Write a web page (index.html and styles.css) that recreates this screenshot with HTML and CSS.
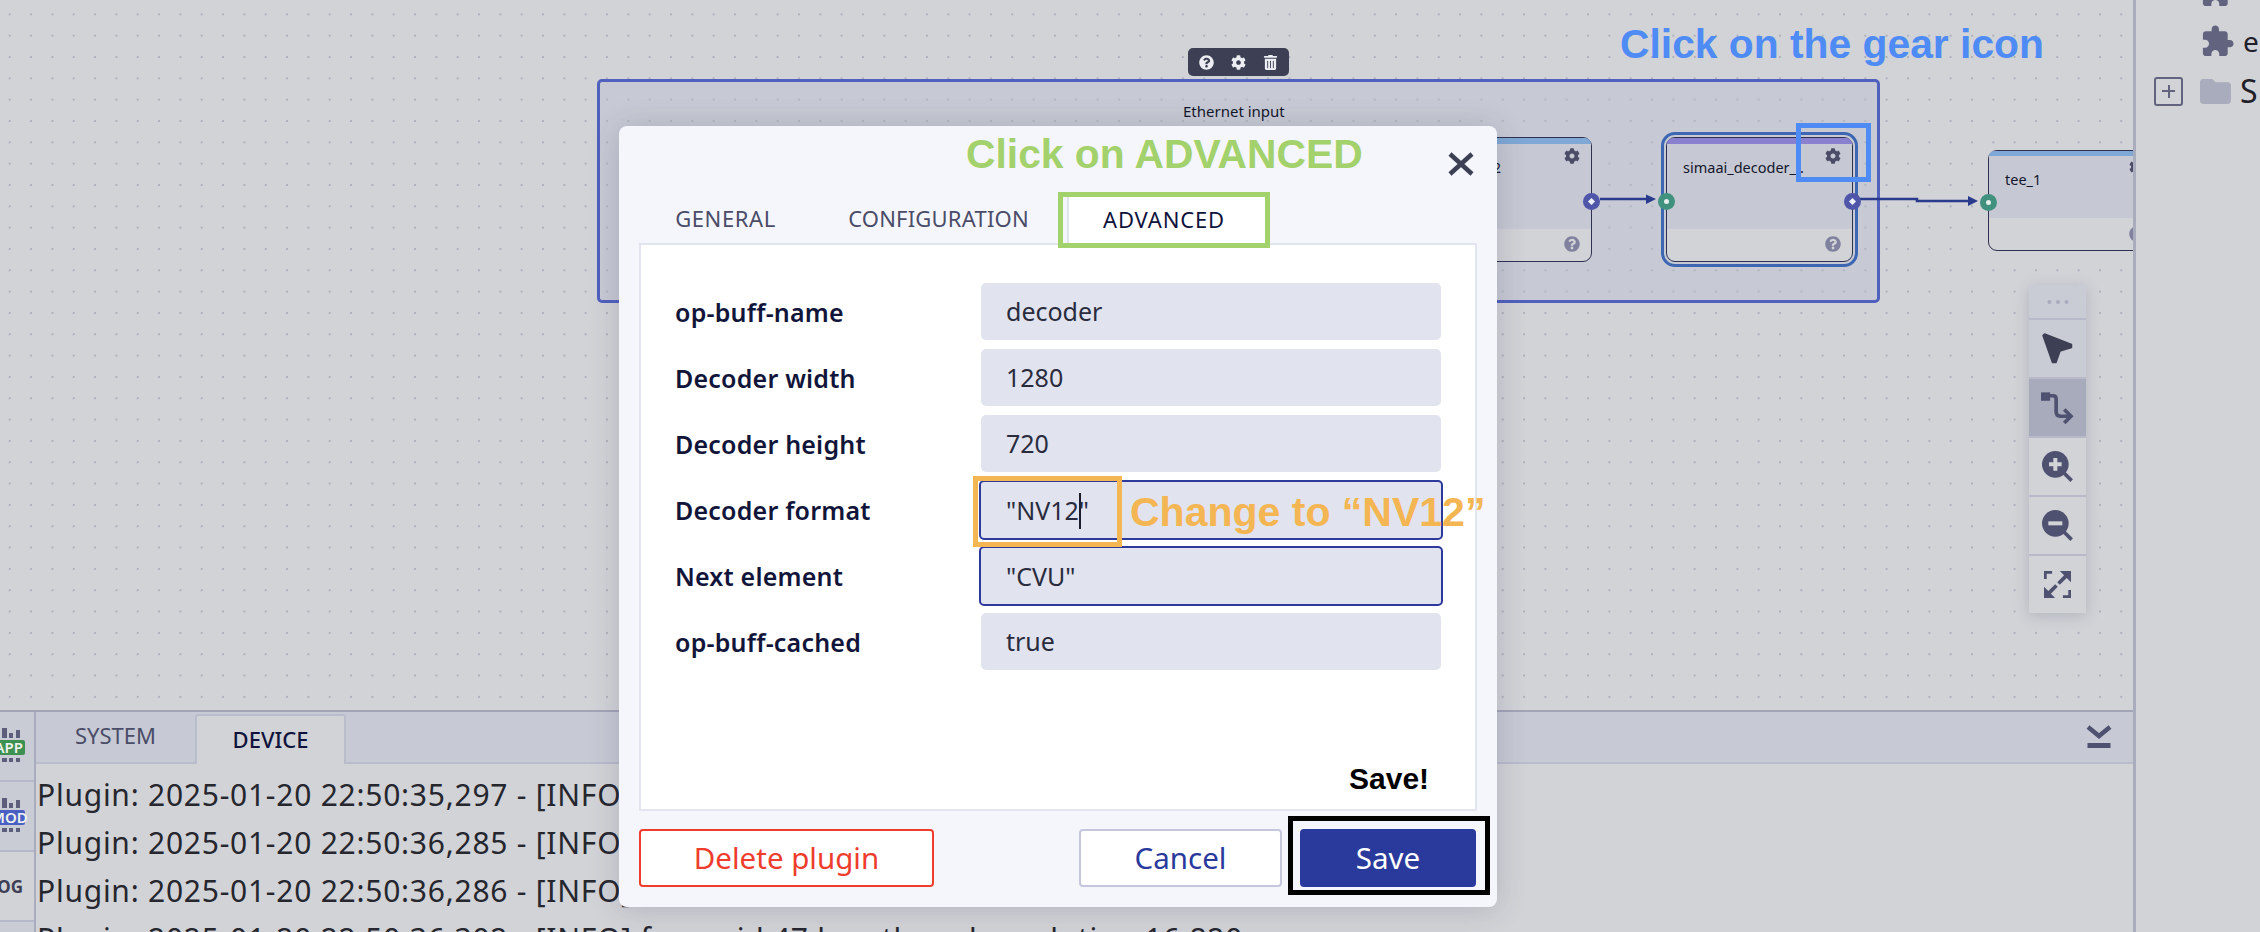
FILE: index.html
```html
<!DOCTYPE html>
<html lang="en">
<head>
<meta charset="utf-8">
<title>Plugin settings</title>
<link rel="stylesheet" href="styles.css">
</head>
<body>
<svg class="defs" width="0" height="0" aria-hidden="true">
  <symbol id="cog" viewBox="0 0 512 512"><path d="M487.4 315.7l-42.6-24.6c4.3-23.2 4.3-47 0-70.2l42.6-24.6c4.9-2.8 7.1-8.6 5.5-14-11.1-35.6-30-67.8-54.7-94.6-3.8-4.1-10-5.1-14.8-2.3L380.8 110c-17.9-15.4-38.5-27.3-60.8-35.1V25.8c0-5.6-3.9-10.5-9.4-11.7-36.7-8.2-74.3-7.8-109.2 0-5.5 1.2-9.4 6.1-9.4 11.7V75c-22.2 7.9-42.8 19.8-60.8 35.1L88.7 85.5c-4.9-2.8-11-1.9-14.8 2.3-24.7 26.7-43.6 58.9-54.7 94.6-1.7 5.4.6 11.2 5.5 14L67.3 221c-4.3 23.2-4.3 47 0 70.2l-42.6 24.6c-4.9 2.8-7.1 8.6-5.5 14 11.1 35.6 30 67.8 54.7 94.6 3.8 4.1 10 5.1 14.8 2.3l42.6-24.6c17.9 15.4 38.5 27.3 60.8 35.1v49.2c0 5.6 3.9 10.5 9.4 11.7 36.7 8.2 74.3 7.8 109.2 0 5.5-1.2 9.4-6.1 9.4-11.7v-49.2c22.2-7.9 42.8-19.8 60.8-35.1l42.6 24.6c4.9 2.8 11 1.9 14.8-2.3 24.7-26.7 43.6-58.9 54.7-94.6 1.5-5.5-.7-11.3-5.6-14.1zM256 336c-44.1 0-80-35.9-80-80s35.9-80 80-80 80 35.9 80 80-35.9 80-80 80z"/></symbol>
  <symbol id="help" viewBox="0 0 512 512"><path d="M504 256c0 136.997-111.043 248-248 248S8 392.997 8 256C8 119.083 119.043 8 256 8s248 111.083 248 248zM262.655 90c-54.497 0-89.255 22.957-116.549 63.758-3.536 5.286-2.353 12.415 2.715 16.258l34.699 26.31c5.205 3.947 12.621 3.008 16.665-2.122 17.864-22.658 30.113-35.797 57.303-35.797 20.429 0 45.698 13.148 45.698 32.958 0 14.976-12.363 22.667-32.534 33.976C247.128 238.528 216 254.941 216 296v4c0 6.627 5.373 12 12 12h56c6.627 0 12-5.373 12-12v-1.333c0-28.462 83.186-29.647 83.186-106.667 0-58.002-60.165-102-116.531-102zM256 338c-25.365 0-46 20.635-46 46 0 25.364 20.635 46 46 46s46-20.636 46-46c0-25.365-20.635-46-46-46z"/></symbol>
  <symbol id="trash" viewBox="0 0 448 512"><path d="M32 464a48 48 0 0 0 48 48h288a48 48 0 0 0 48-48V128H32zm272-256a16 16 0 0 1 32 0v224a16 16 0 0 1-32 0zm-96 0a16 16 0 0 1 32 0v224a16 16 0 0 1-32 0zm-96 0a16 16 0 0 1 32 0v224a16 16 0 0 1-32 0zM432 32H312l-9.4-18.7A24 24 0 0 0 281.1 0H166.8a23.72 23.72 0 0 0-21.4 13.3L136 32H16A16 16 0 0 0 0 48v32a16 16 0 0 0 16 16h416a16 16 0 0 0 16-16V48a16 16 0 0 0-16-16z"/></symbol>
  <symbol id="puzzle" viewBox="0 0 24 24"><path d="M20.5 11H19V7c0-1.1-.9-2-2-2h-4V3.5C13 2.12 11.88 1 10.5 1S8 2.12 8 3.5V5H4c-1.1 0-1.99.9-1.99 2v3.8H3.5c1.49 0 2.7 1.21 2.7 2.7s-1.21 2.7-2.7 2.7H2V20c0 1.1.9 2 2 2h3.8v-1.5c0-1.49 1.21-2.7 2.7-2.7 1.49 0 2.7 1.21 2.7 2.7V22H17c1.1 0 2-.9 2-2v-4h1.5c1.38 0 2.5-1.12 2.5-2.5S21.88 11 20.5 11z"/></symbol>
</svg>

<div class="app">
  <div class="main">
    <section class="canvas">
      <div class="group">
        <div class="group-title">Ethernet input</div>
      </div>
      <div class="group-tools">
        <svg class="gt-icon"><use href="#help"/></svg>
        <svg class="gt-icon"><use href="#cog"/></svg>
        <svg class="gt-icon"><use href="#trash"/></svg>
      </div>

      <svg class="edges" width="2133" height="711" viewBox="0 0 2133 711">
        <path class="edge" d="M1600 199H1648"/>
        <polygon class="edge-head" points="1646,194.5 1656,199 1646,204"/>
        <path class="edge" d="M1858 199H1917V201H1970"/>
        <polygon class="edge-head" points="1968,196 1978,201 1968,206"/>
      </svg>

      <article class="node node-prev">
        <div class="node-strip"></div>
        <div class="node-body"><span class="node-name name-prev">rtpdepay_2</span></div>
        <div class="node-foot"></div>
        <svg class="node-gear"><use href="#cog"/></svg>
        <svg class="node-help"><use href="#help"/></svg>
        <span class="port port-out"></span>
      </article>

      <div class="node-ring"></div>
      <article class="node node-sel">
        <div class="node-strip strip-purple"></div>
        <div class="node-body"><span class="node-name">simaai_decoder_..</span></div>
        <div class="node-foot"></div>
        <svg class="node-gear"><use href="#cog"/></svg>
        <svg class="node-help"><use href="#help"/></svg>
        <span class="port port-in"></span>
        <span class="port port-out"></span>
      </article>

      <div class="tee-clip">
        <article class="node node-tee">
          <div class="node-strip"></div>
          <div class="node-body"><span class="node-name">tee_1</span></div>
          <div class="node-foot"></div>
          <svg class="node-gear"><use href="#cog"/></svg>
          <svg class="node-help"><use href="#help"/></svg>
          <span class="port port-in"></span>
        </article>
      </div>

      <div class="mini-tools">
        <div class="mt mt-handle">
          <svg width="22" height="6" viewBox="0 0 22 6"><circle class="mt-dot" cx="2.5" cy="3" r="2"/><circle class="mt-dot" cx="11" cy="3" r="2"/><circle class="mt-dot" cx="19.5" cy="3" r="2"/></svg>
        </div>
        <div class="mt mt-tint">
          <svg width="31" height="31" viewBox="0 0 31 31"><path class="mt-dark" d="M1 2.6L2.6 1 29.5 11.5 29.5 14.5 18 18 14 29.5 10.5 29.5z"/></svg>
        </div>
        <div class="mt mt-active">
          <svg width="37" height="37" viewBox="180 360 110 110"><rect class="mt-fill" x="186" y="370" width="27" height="25"/><path class="mt-line" d="M210 380H222Q231 380 231 390V428Q231 441 244 441H274"/><path class="mt-line" d="M255 421L275 441 255 461"/></svg>
        </div>
        <div class="mt">
          <svg width="35" height="35" viewBox="180 540 105 105"><circle class="mt-fill" cx="226" cy="586" r="40"/><path class="mt-line" d="M252 612L275 635"/><path class="mt-knock" d="M207 586H245M226 567V605"/></svg>
        </div>
        <div class="mt">
          <svg width="35" height="35" viewBox="180 540 105 105"><circle class="mt-fill" cx="226" cy="586" r="40"/><path class="mt-line" d="M252 612L275 635"/><path class="mt-knock" d="M205 586H247"/></svg>
        </div>
        <div class="mt">
          <svg width="29" height="29" viewBox="190 907 86 86"><path class="mt-line mt-miter" d="M197 934V914H217M269 966V986H249"/><polygon class="mt-fill" points="240,910 273,910 273,943"/><polygon class="mt-fill" points="193,990 193,957 226,990"/><path class="mt-line" d="M258 925L236 947M208 975L230 953"/></svg>
        </div>
      </div>
    </section>

    <section class="console">
      <nav class="rail">
        <div class="rail-item rail-tint">
          <div class="bars"><i class="b1"></i><i class="b2"></i><i class="b3"></i></div>
          <div class="badge badge-app">APP</div>
          <div class="squares"><i></i><i></i><i></i></div>
        </div>
        <div class="rail-item rail-tint">
          <div class="bars"><i class="b1"></i><i class="b2"></i><i class="b3"></i></div>
          <div class="badge badge-mod">MOD</div>
          <div class="squares"><i></i><i></i><i></i></div>
        </div>
        <div class="rail-item rail-log"><span class="log-label">LOG</span></div>
        <div class="rail-item rail-tint"></div>
      </nav>
      <div class="console-main">
        <div class="console-tabs">
          <div class="ctab">SYSTEM</div>
          <div class="ctab ctab-active">DEVICE</div>
          <svg class="collapse" width="26" height="25" viewBox="0 0 26 25"><path d="M2 2L13 11 24 2" /><rect x="1.5" y="18" width="23" height="5"/></svg>
        </div>
        <div class="log">
          <div>Plugin: 2025-01-20 22:50:35,297 - [INFO]</div>
          <div>Plugin: 2025-01-20 22:50:36,285 - [INFO]</div>
          <div>Plugin: 2025-01-20 22:50:36,286 - [INFO]</div>
          <div>Plugin: 2025-01-20 22:50:36,302 - [INFO] frame id 47 length and resolution 16,820</div>
        </div>
      </div>
    </section>
  </div>

  <aside class="tree">
    <div class="tree-row tree-leaf"><svg class="tree-puzzle"><use href="#puzzle"/></svg></div>
    <div class="tree-row tree-leaf"><svg class="tree-puzzle"><use href="#puzzle"/></svg><span class="tree-text">ethernet</span></div>
    <div class="tree-row tree-folder">
      <span class="plus-box"></span>
      <svg class="tree-dir" viewBox="2 4 20 16"><path d="M10 4H4c-1.1 0-1.99.9-1.99 2L2 18c0 1.1.9 2 2 2h16c1.1 0 2-.9 2-2V8c0-1.1-.9-2-2-2h-8l-2-2z"/></svg>
      <span class="tree-text">Samples</span>
    </div>
  </aside>
</div>

<div class="modal">
  <svg class="close" width="26" height="24" viewBox="0 0 26 24"><path d="M2 2L24 22M24 2L2 22"/></svg>
  <div class="tabs">
    <div class="tab tab-general">GENERAL</div>
    <div class="tab tab-config">CONFIGURATION</div>
    <div class="tab tab-active">ADVANCED</div>
  </div>
  <div class="panel">
    <div class="form">
      <div class="label">op-buff-name</div><div class="field">decoder</div>
      <div class="label">Decoder width</div><div class="field">1280</div>
      <div class="label">Decoder height</div><div class="field">720</div>
      <div class="label">Decoder format</div><div class="field field-focus">"NV12<span class="caret"></span>"</div>
      <div class="label">Next element</div><div class="field field-focus">"CVU"</div>
      <div class="label">op-buff-cached</div><div class="field">true</div>
    </div>
  </div>
  <div class="actions">
    <button class="btn btn-delete">Delete plugin</button>
    <button class="btn btn-cancel">Cancel</button>
    <button class="btn btn-save">Save</button>
  </div>
</div>

<div class="note note-gear">Click on the gear icon</div>
<div class="mark mark-gear"></div>
<div class="note note-adv">Click on ADVANCED</div>
<div class="mark mark-adv"></div>
<div class="mark mark-fmt"></div>
<div class="note note-fmt">Change to “NV12”</div>
<div class="note note-save">Save!</div>
<div class="mark mark-save"></div>
</body>
</html>
```

FILE: styles.css
```css
* { box-sizing: border-box; }
html, body { margin: 0; height: 100%; }
body {
  width: 2260px;
  height: 932px;
  position: relative;
  overflow: hidden;
  background: #d2d3d7;
  font-family: "Noto Sans", "Open Sans", sans-serif;
  color: #12153a;
}
.defs { position: absolute; }

.app { display: flex; width: 2260px; height: 932px; }
.main { width: 2133px; height: 932px; display: flex; flex-direction: column; }

/* canvas */
.canvas {
  position: relative;
  height: 710px;
  overflow: hidden;
  background-color: #d2d3d7;
  background-image: radial-gradient(circle, #aeb0bb 1px, transparent 1.4px);
  background-size: 21.33px 21.33px;
  background-position: -0.9px 3.7px;
}
.group {
  position: absolute;
  left: 597px; top: 79px;
  width: 1283px; height: 224px;
  border: 3px solid #5060bd;
  border-radius: 5px;
  background: rgba(183, 190, 208, .42);
}
.group-title {
  position: absolute;
  left: 583px; top: 19px;
  font-size: 15px;
  line-height: 20px;
  color: #14162c;
  white-space: nowrap;
}
.group-tools {
  position: absolute;
  left: 1188px; top: 48px;
  width: 101px; height: 28px;
  background: #3d3f54;
  border-radius: 5px;
  display: flex;
  align-items: center;
  justify-content: center;
  gap: 17px;
}
.gt-icon { width: 15px; height: 15px; fill: #eceef3; }

.edges { position: absolute; left: 0; top: 0; }
.edge { fill: none; stroke: #2a3a8c; stroke-width: 2.6; }
.edge-head { fill: #2a3a8c; }

.node {
  position: absolute;
  width: 187px;
  display: flex;
  flex-direction: column;
  border: 1.5px solid #2f3150;
  border-radius: 9px;
  background: #d2d3d7;
}
.node-prev { left: 1405px; top: 137px; height: 125px; }
.node-sel { left: 1666px; top: 137px; height: 125px; }
.node-strip {
  height: 6px;
  background: #7fa8d6;
  border-radius: 7px 7px 0 0;
}
.strip-purple { background: #8a80d0; }
.node-body {
  height: 85px;
  background: #c6c9d3;
  padding: 13px 0 0 16px;
}
.node-name { font-size: 14.5px; line-height: 20px; color: #14162c; white-space: nowrap; display: block; }
.name-prev { letter-spacing: .3px; }
.node-foot { flex: 1; }
.node-gear { position: absolute; right: 11px; top: 10px; width: 16px; height: 16px; fill: #4a4c68; }
.node-help { position: absolute; right: 11px; bottom: 9px; width: 16px; height: 16px; fill: #7f819e; }
.port {
  position: absolute;
  top: 55px;
  width: 17px; height: 17px;
  border-radius: 50%;
  display: block;
}
.port-in { left: -9px; background: #41917f; }
.port-in::after {
  content: ""; position: absolute; left: 6px; top: 6px;
  width: 5px; height: 5px; border-radius: 50%; background: #e6efec;
}
.port-out { right: -9px; background: #4f55a8; }
.port-out::after {
  content: ""; position: absolute; left: 6px; top: 6px;
  width: 5px; height: 5px; background: #eef0f8; transform: rotate(45deg);
}
.node-ring {
  position: absolute;
  left: 1661px; top: 132px;
  width: 197px; height: 135px;
  border: 3px solid #3d66b3;
  border-radius: 14px;
}
.tee-clip {
  position: absolute;
  left: 1970px; top: 140px;
  width: 163px; height: 120px;
  overflow: hidden;
}
.node-tee { left: 18px; top: 10px; height: 101px; width: 187px; }
.node-tee .node-strip { height: 5px; }
.node-tee .node-body { height: 62px; }
.node-tee .port { top: 43px; }
.node-tee .node-gear { right: 29px; top: 8px; }
.node-tee .node-help { right: 29px; bottom: 8px; }

/* floating tools on the canvas */
.mini-tools {
  position: absolute;
  left: 2029px; top: 285px;
  width: 57px;
  display: flex;
  flex-direction: column;
  gap: 2px;
  background: #b8bac9;
  box-shadow: 0 3px 14px rgba(70, 72, 100, .22);
}
.mt {
  height: 57px;
  background: #d2d3d7;
  display: flex;
  align-items: center;
  justify-content: center;
}
.mt-handle { height: 33px; background: #c9ccd5; }
.mt-tint { background: #c9ccd5; }
.mt-active { background: #a8abbc; }
.mt-dot { fill: #a9acc0; }
.mt-dark { fill: #3d3f54; stroke: #3d3f54; stroke-width: 1.5; stroke-linejoin: round; }
.mt-fill { fill: #4f5170; }
.mt-line { fill: none; stroke: #4f5170; stroke-width: 11; }
.mt-miter { stroke-width: 8; }
.mt-knock { fill: none; stroke: #d2d3d7; stroke-width: 12; }

/* console */
.console {
  height: 222px;
  display: flex;
  border-top: 2px solid #a2a5b8;
  overflow: hidden;
}
.rail {
  width: 36px;
  border-right: 2px solid #a9acbd;
  display: flex;
  flex-direction: column;
  flex: none;
  overflow: hidden;
}
.rail-item {
  height: 70px;
  flex: none;
  border-bottom: 2px solid #b5b8c8;
  display: flex;
  flex-direction: column;
  align-items: flex-end;
  padding: 16px 9px 0 0;
  overflow: hidden;
}
.rail-tint { background: #c9ccd5; }
.rail-log { padding-top: 0; justify-content: center; background: #d2d3d7; }
.rail-item:last-child { border-bottom: 0; }
.bars {
  width: 18px; height: 10px;
  margin-right: 5px;
  display: flex;
  justify-content: space-between;
  align-items: flex-end;
}
.bars i { width: 4.5px; background: #5c5e7c; display: block; }
.bars .b1 { height: 10px; }
.bars .b2 { height: 5px; }
.bars .b3 { height: 8px; }
.badge {
  flex: none;
  width: 34px;
  height: 15px;
  margin-top: 2px;
  border-radius: 2px;
  color: #eef2ee;
  font-size: 15px;
  font-weight: 600;
  line-height: 15px;
  text-align: right;
  padding-right: 2px;
  white-space: nowrap;
}
.badge-app { background: #3d9150; }
.badge-mod { background: #4a5fc4; }
.squares { width: 18px; margin: 3px 5px 0 0; display: flex; justify-content: space-between; }
.squares i { width: 4.5px; height: 3.5px; background: #5c5e7c; display: block; }
.log-label {
  font-size: 17px;
  font-weight: 700;
  color: #3d3f54;
  white-space: nowrap;
  margin-right: 2px;
  flex: none;
}
.console-main { flex: 1; min-width: 0; display: flex; flex-direction: column; }
.console-tabs {
  height: 52px;
  flex: none;
  display: flex;
  align-items: stretch;
  background: #c7cad4;
  border-bottom: 2px solid #b9bccb;
}
.ctab {
  width: 159px;
  font-size: 22px;
  line-height: 46px;
  text-align: center;
  color: #4a4c68;
}
.ctab-active {
  width: 151px;
  margin: 2px 0 -2px;
  background: #d2d3d7;
  border: 2px solid #b9bccb;
  border-bottom: 0;
  border-radius: 3px 3px 0 0;
  color: #10143c;
  font-weight: 500;
}
.collapse { margin: 13px 21px 0 auto; }
.collapse path { fill: none; stroke: #4f5170; stroke-width: 4.5; }
.collapse rect { fill: #4f5170; }
.log {
  padding: 7px 0 0 1px;
  font-size: 30px;
  line-height: 48px;
  letter-spacing: .75px;
  color: #25262e;
  white-space: nowrap;
}

/* right tree */
.tree {
  width: 127px;
  height: 932px;
  flex: none;
  border-left: 3px solid #a9acbd;
  background: #d2d3d7;
  overflow: hidden;
  color: #1f2029;
}
.tree-row { height: 50px; display: flex; align-items: center; white-space: nowrap; }
.tree-row:first-child { margin-top: -34px; }
.tree-leaf { padding-left: 64px; }
.tree-folder { padding-left: 18px; }
.tree-puzzle { width: 35px; height: 35px; fill: #62647f; flex: none; }
.tree-text { font-size: 28px; margin-left: 8px; line-height: 36px; letter-spacing: 5px; }
.plus-box {
  width: 29px; height: 29px;
  border: 2px solid #62647f;
  border-radius: 3px;
  flex: none;
  position: relative;
}
.plus-box::before, .plus-box::after { content: ""; position: absolute; background: #62647f; }
.plus-box::before { left: 6px; right: 6px; top: 11.5px; height: 2px; }
.plus-box::after { top: 6px; bottom: 6px; left: 11.5px; width: 2px; }
.tree-dir { width: 31px; height: 27px; margin-left: 17px; fill: #a9acbd; flex: none; }
.tree-folder .tree-text { margin-left: 9px; font-size: 32px; }

/* modal */
.modal {
  position: absolute;
  left: 619px; top: 126px;
  width: 878px; height: 781px;
  background: #f5f6fc;
  border-radius: 8px;
  box-shadow: 0 2px 30px rgba(50, 52, 80, .2);
  padding: 68px 20px 0 20px;
  display: flex;
  flex-direction: column;
}
.close { position: absolute; left: 829px; top: 26px; }
.close path { fill: none; stroke: #3d3f54; stroke-width: 4.5; }
.tabs { display: flex; height: 51px; flex: none; margin-bottom: -2px; position: relative; }
.tab {
  font-size: 22px;
  line-height: 48px;
  text-align: center;
  color: #4a4c68;
  border-bottom: 2px solid #e2e4ef;
}
.tab-general { width: 173px; letter-spacing: .6px; }
.tab-config { width: 253px; letter-spacing: .2px; }
.tab-active {
  width: 202px;
  margin-left: 2px;
  padding-right: 8px;
  line-height: 46px;
  background: #fff;
  color: #10143c;
  border: 2px solid #e2e4ef;
  border-bottom-color: #fff;
  border-radius: 3px 3px 0 0;
  letter-spacing: .85px;
}
.panel {
  height: 568px;
  flex: none;
  background: #fff;
  border: 2px solid #e2e4ef;
  padding: 38px 34px 0 34px;
}
.form {
  display: grid;
  grid-template-columns: 306px 460px;
  grid-auto-rows: 57px;
  row-gap: 9px;
  align-items: center;
}
.label { font-size: 25px; font-weight: 600; color: #12153a; white-space: nowrap; letter-spacing: .2px; }
.field {
  height: 57px;
  background: #e1e3ee;
  border-radius: 5px;
  padding: 0 25px;
  font-size: 25px;
  line-height: 57px;
  color: #2a2c3e;
  white-space: nowrap;
}
.field-focus {
  margin: 0 -2px;
  height: 60px;
  padding: 0 27px;
  line-height: 57px;
  border: 2px solid #2d3a9c;
  padding-left: 25px;
}
.caret {
  display: inline-block;
  width: 0;
  height: 36px;
  border-left: 2px solid #1c1d2c;
  vertical-align: -9px;
  margin-right: -2px;
}
.actions { display: flex; gap: 18px; margin-top: 18px; height: 58px; flex: none; padding-right: 1px; }
.btn {
  height: 58px;
  font-family: inherit;
  font-size: 29.5px;
  border-radius: 4px;
  cursor: pointer;
  padding: 0 0 2px;
}
.btn-delete { width: 295px; margin-right: auto; background: #fff; color: #ee3d2d; border: 2px solid #ee3d2d; }
.btn-cancel { width: 203px; background: #fff; color: #2a3a9c; border: 2px solid #c4c6dc; }
.btn-save { width: 176px; background: #2a3a9c; color: #fff; border: 0; }

/* tutorial annotations */
.note {
  position: absolute;
  font-family: "Liberation Sans", Arial, sans-serif;
  font-weight: 700;
  white-space: nowrap;
  line-height: 48px;
}
.note-gear { left: 1620px; top: 20px; font-size: 40.8px; color: #4f8bf5; }
.note-adv { left: 966px; top: 130px; font-size: 40.8px; color: #a3d16c; }
.note-fmt { left: 1130px; top: 488px; font-size: 41px; color: #f4b553; }
.note-save { left: 1349px; top: 755px; font-size: 30px; color: #000; }
.mark { position: absolute; border: 5px solid; }
.mark-gear { left: 1796px; top: 123px; width: 75px; height: 59px; border-color: #4f8bf5; }
.mark-adv { left: 1058px; top: 192px; width: 212px; height: 56px; border-color: #a3d16c; }
.mark-fmt { left: 973px; top: 476px; width: 149px; height: 71px; border-color: #f4b553; }
.mark-save { left: 1288px; top: 816px; width: 202px; height: 79px; border-color: #000; }
```
